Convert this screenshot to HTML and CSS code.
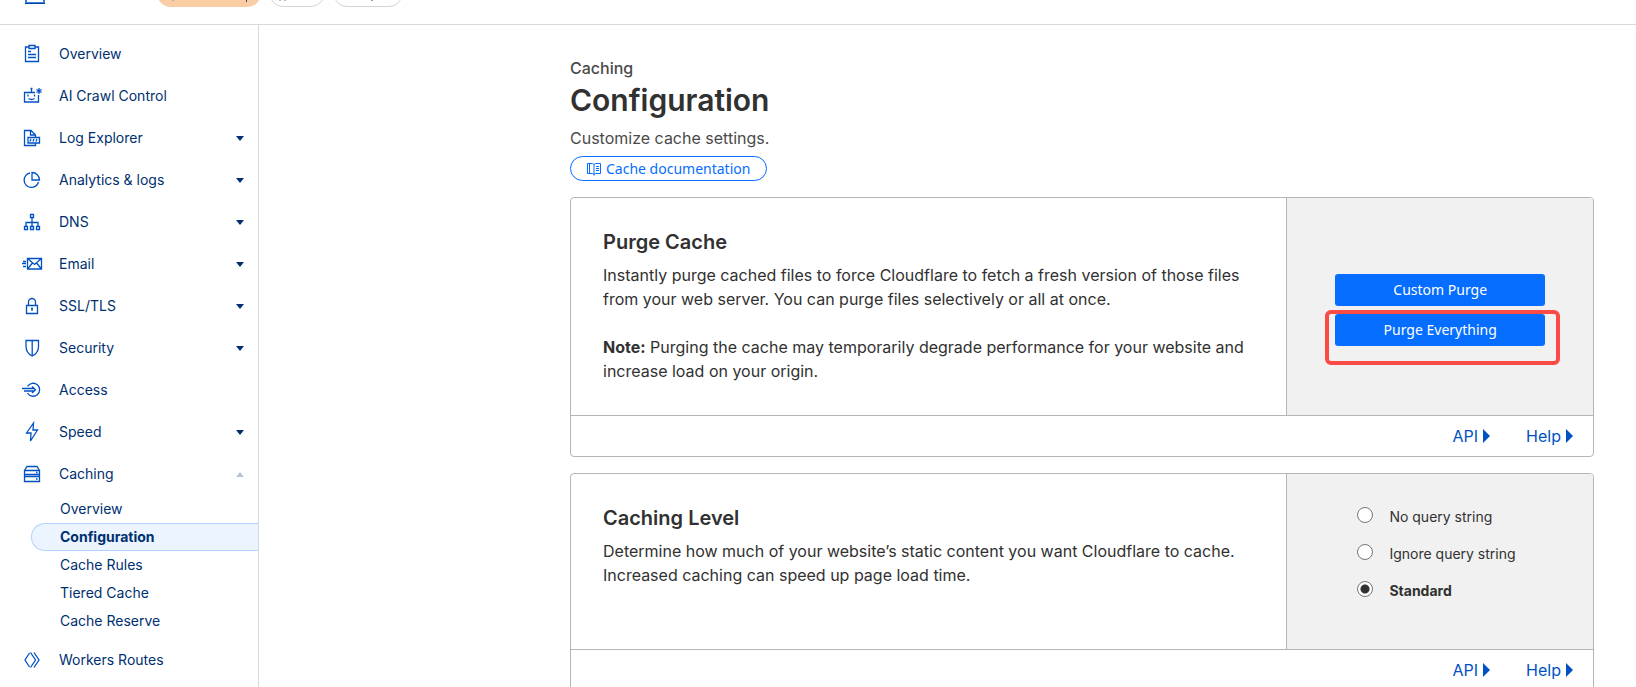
FILE: index.html
```html
<!DOCTYPE html>
<html lang="en">
<head>
  <meta charset="UTF-8">
  <meta name="viewport" content="width=device-width, initial-scale=1.0">
  <title>Caching Configuration</title>
  <link rel="stylesheet" href="styles.css">
</head>
<body>
  <header class="topbar">
    <svg class="top-icon" width="20" height="16" viewBox="0 0 20 16"><path d="M1 0v15h18V0" fill="none" stroke="#3b7ddd" stroke-width="2"/><path d="M0 15.5h20" stroke="#0045a6"/></svg>
    <span class="pill pill-orange">
      <svg width="104" height="28" viewBox="0 0 104 28"><path d="M15 21.5h2" stroke="#b8b0a8"/><path d="M89.500 20v3" stroke="#4a4060"/></svg>
    </span>
    <span class="pill">
      <svg width="54" height="26" viewBox="0 0 54 26"><path d="M9 20.500h2M14 20.500h2" stroke="#bbb"/></svg>
    </span>
    <span class="pill">
      <svg width="68" height="26" viewBox="0 0 68 26"><path d="M37.500 18v3" stroke="#c08a50"/><path d="M38.500 18v3" stroke="#6fb0e8"/></svg>
    </span>
  </header>

  <div class="layout">
    <nav class="sidebar">
      <a class="nav-item" href="#">
        <svg viewBox="0 0 20 20"><path d="M7 3H3.500v14.500h13V3H13M7 1.500h6v3H7zM6 7.500h3M6 10.500h8M6 13.500h8"/></svg>
        <span>Overview</span>
      </a>
      <a class="nav-item" href="#">
        <svg viewBox="0 0 20 20"><path d="M13 6.500H2.500v9.500h14V9M9.500 6.500V3M8.500 2.500h2M6 8.500v2M12.500 8.500v2M6.500 12.500q3 2 6 0M17 2v6M14.400 3.500l5.200 3M14.400 6.500l5.200-3"/></svg>
        <span>AI Crawl Control</span>
      </a>
      <a class="nav-item has-caret" href="#">
        <svg viewBox="0 0 20 20"><path d="M13.500 9.500V7L9 2.500H2.500v15h11v-2M8.500 2.500V7h5M6 9.500h11.500v5.500H6zM8 13.500l1-2.500M11 13.500l1-2.500M14 13.500l1-2.500"/></svg>
        <span>Log Explorer</span>
      </a>
      <a class="nav-item has-caret" href="#">
        <svg viewBox="0 0 20 20"><path d="M8 3a7.300 7.300 0 1 0 8.500 9M10 2.500a7.500 7.500 0 0 1 7.500 7.500H10z"/></svg>
        <span>Analytics &amp; logs</span>
      </a>
      <a class="nav-item has-caret" href="#">
        <svg viewBox="0 0 20 20"><path d="M8.500 2.500h3v3h-3zM2.500 14.500h3v3h-3zM8.500 14.500h3v3h-3zM14.500 14.500h3v3h-3zM10 5.500v9M4 14.500v-4h12v4"/></svg>
        <span>DNS</span>
      </a>
      <a class="nav-item has-caret" href="#">
        <svg viewBox="0 0 20 20"><path d="M5.500 4.500h14v10.500h-14zM5.500 4.500l7 6 7-6M5.500 15l5-6M19.500 15l-5-6M1 7.500h3M0 9.500h4M1 12.500h3"/></svg>
        <span>Email</span>
      </a>
      <a class="nav-item has-caret" href="#">
        <svg viewBox="0 0 20 20"><path d="M4.500 9.500h11v8h-11zM6.500 9.500V6a3.500 3.500 0 0 1 7 0v3.500M10 12v3M9 12.500h2"/></svg>
        <span>SSL/TLS</span>
      </a>
      <a class="nav-item has-caret" href="#">
        <svg viewBox="0 0 20 20"><path d="M4 2.500h12.500v6q0 6.500-6.250 9.500Q4 15 4 8.500zM10.200 2.500V18"/></svg>
        <span>Security</span>
      </a>
      <a class="nav-item" href="#">
        <svg viewBox="0 0 20 20"><path d="M5.500 6.500a6.500 6.500 0 1 1 0 6.500M0 8.500h12M2 11h10M10 6.500l3.500 3.200-3.500 3.300"/></svg>
        <span>Access</span>
      </a>
      <a class="nav-item has-caret" href="#">
        <svg viewBox="0 0 20 20"><path d="M11.500 1l-7 10h4.500l-.500 8 7-11h-4.500z"/></svg>
        <span>Speed</span>
      </a>
      <a class="nav-item has-caret open" href="#">
        <svg viewBox="0 0 20 20"><path d="M2.500 6.500h15v4h-15zM2.500 12.500h15v5h-15zM2.500 6.500l2.500-4h10l2.500 4M2.500 10.500v2M17.500 10.500v2M14 8.500h1.500M14 15h1.500"/></svg>
        <span>Caching</span>
      </a>
      <div class="sub-nav">
        <a href="#">Overview</a>
        <a class="active" href="#">Configuration</a>
        <a href="#">Cache Rules</a>
        <a href="#">Tiered Cache</a>
        <a href="#">Cache Reserve</a>
      </div>
      <a class="nav-item" href="#">
        <svg viewBox="0 0 20 20"><path d="M7.500 3L3 10l4.500 7M8.500 2.500l5 7.500-5 7.500M12 2.500l5 7.500-5 7.500"/></svg>
        <span>Workers Routes</span>
      </a>
    </nav>

    <main class="content">
      <p class="section-name">Caching</p>
      <h1>Configuration</h1>
      <p class="intro">Customize cache settings.</p>
      <a class="doc-link" href="#">
        <svg width="14" height="14" viewBox="0 0 14 14"><path d="M.500 1.500h5L7 2.500l1.500-1h5v10h-5L7 12.500l-1.500-1h-5zM7 2.500v11M9 4.500h3M9 6.500h3M9 8.500h3M2.500 1.500v10"/></svg>
        Cache documentation
      </a>

      <section class="card">
        <div class="card-body">
          <div class="card-text">
            <h2>Purge Cache</h2>
            <p>Instantly purge cached files to force Cloudflare to fetch a fresh version of those files from your web server. You can purge files selectively or all at once.</p>
            <p><strong>Note:</strong> Purging the cache may temporarily degrade performance for your website and increase load on your origin.</p>
          </div>
          <div class="card-side purge-actions">
            <button type="button">Custom Purge</button>
            <div class="marked">
              <button type="button">Purge Everything</button>
            </div>
          </div>
        </div>
        <div class="card-footer">
          <a href="#">API</a>
          <a href="#">Help</a>
        </div>
      </section>

      <section class="card">
        <div class="card-body">
          <div class="card-text">
            <h2>Caching Level</h2>
            <p>Determine how much of your website’s static content you want Cloudflare to cache. Increased caching can speed up page load time.</p>
          </div>
          <div class="card-side cache-levels">
            <label><input type="radio" name="level" value="none"><span>No query string</span></label>
            <label><input type="radio" name="level" value="ignore"><span>Ignore query string</span></label>
            <label><input type="radio" name="level" value="standard" checked><span>Standard</span></label>
          </div>
        </div>
        <div class="card-footer">
          <a href="#">API</a>
          <a href="#">Help</a>
        </div>
      </section>
    </main>
  </div>
</body>
</html>
```
FILE: styles.css
```css
* {
  box-sizing: border-box;
}
body {
  font-family: Inter, 'Liberation Sans', sans-serif;
  background-color: #fff;
  margin: 0;
  height: 100vh;
  overflow: hidden;
  color: #313131;
  font-size: 16px;
  line-height: 24px;
}
h1, h2, p {
  margin: 0;
}
a {
  text-decoration: none;
}

/* Top bar */
.topbar {
  display: flex;
  align-items: flex-end;
  gap: 8px;
  height: 25px;
  padding: 0 25px 17px;
  border-bottom: 1px solid #d9d9d9;
  overflow: hidden;
}
.top-icon {
  margin: 0 104px 3px 0;
}
.pill {
  flex: none;
  height: 28px;
  border: 1px solid #d5d5d5;
  border-radius: 14px;
}
.pill svg {
  display: block;
}
.pill-orange {
  border: none;
  background-color: #fbcda5;
}

.layout {
  display: flex;
}

/* Sidebar */
.sidebar {
  flex: none;
  width: 259px;
  min-height: calc(100vh - 25px);
  padding-top: 8px;
  border-right: 1px solid #d9d9d9;
  font-size: 14px;
}
.nav-item {
  display: flex;
  align-items: center;
  gap: 17px;
  height: 42px;
  padding: 0 14px 0 22px;
  color: #003070;
}
.nav-item svg {
  flex: none;
  width: 20px;
  height: 20px;
  overflow: visible;
  fill: none;
  stroke: #0051c3;
  stroke-width: 1.3;
}
.has-caret::after {
  content: '';
  margin-left: auto;
  border: 4px solid transparent;
  border-top: 5px solid #003070;
  border-bottom: none;
}
.has-caret.open::after {
  border-top: none;
  border-bottom: 5px solid #b9c6d8;
}
.sub-nav {
  display: flex;
  flex-direction: column;
  padding-left: 31px;
  margin-bottom: 4px;
}
.sub-nav a {
  height: 28px;
  padding-left: 28px;
  border: 1px solid transparent;
  border-right: none;
  border-radius: 14px 0 0 14px;
  line-height: 26px;
  color: #003070;
}
.sub-nav .active {
  background-color: #ebf4ff;
  border-color: #b0d2fc;
  font-weight: 700;
}

/* Page content */
.content {
  flex: 1;
  max-width: 1066px;
  margin-left: auto;
  padding: 31px 42px 0 0;
}
.section-name {
  font-weight: 500;
  color: #4a4a4a;
}
h1 {
  font-size: 30px;
  font-weight: 600;
  line-height: 40px;
}
.intro {
  margin-top: 6px;
  color: #4a4a4a;
}
.doc-link {
  display: flex;
  align-items: center;
  gap: 5px;
  width: fit-content;
  height: 25px;
  margin: 6px 0 16px;
  padding: 0 16px;
  border: 1px solid #056dff;
  border-radius: 13px;
  font-family: 'Noto Sans', 'Open Sans', sans-serif;
  font-size: 14px;
  line-height: 23px;
  color: #056dff;
}
.doc-link svg {
  fill: none;
  stroke: #056dff;
}

/* Cards */
.card {
  margin-bottom: 16px;
  border: 1px solid #b5b5b5;
  border-radius: 4px;
  overflow: hidden;
}
.card-body {
  display: flex;
}
.card-text {
  flex: 1;
  padding: 32px;
}
.card-text h2 {
  margin-bottom: 8px;
  font-size: 20px;
  font-weight: 600;
  line-height: 25px;
}
.card-text p + p {
  margin-top: 24px;
}
.card-side {
  flex: none;
  width: 30%;
  border-left: 1px solid #b5b5b5;
  background-color: #f1f1f1;
}
.purge-actions {
  display: flex;
  flex-direction: column;
  justify-content: center;
  gap: 8px;
  padding: 6px 48px 0;
}
.purge-actions button {
  display: block;
  width: 100%;
  height: 32px;
  padding: 0;
  border: none;
  border-radius: 3px;
  background-color: #056dff;
  font-family: 'Noto Sans', 'Open Sans', sans-serif;
  font-size: 14px;
  color: #fff;
}
.marked {
  position: relative;
}
.marked::after {
  content: '';
  position: absolute;
  top: -4px;
  right: -15px;
  bottom: -19px;
  left: -10px;
  border: 4px solid #fa4b47;
  border-radius: 6px;
  pointer-events: none;
}
.cache-levels {
  padding: 24px 48px 40px 70px;
}
.cache-levels label {
  display: flex;
  align-items: center;
  gap: 16px;
  height: 37px;
  font-size: 14px;
}
.cache-levels input {
  appearance: none;
  width: 16px;
  height: 16px;
  margin: 0 0 4px;
  border: 1px solid #777;
  border-radius: 50%;
  background-color: #fff;
}
.cache-levels input:checked {
  background: radial-gradient(circle, #313131 4px, #fff 5px);
}
.cache-levels input:checked + span {
  font-weight: 700;
}
.card-footer {
  display: flex;
  justify-content: flex-end;
  gap: 36px;
  padding: 8px 20px;
  border-top: 1px solid #b5b5b5;
}
.card-footer a {
  display: flex;
  align-items: center;
  gap: 5px;
  color: #0051c3;
}
.card-footer a::after {
  content: '';
  border: 7px solid transparent;
  border-left: 7px solid #0051c3;
  border-right: none;
}
```
